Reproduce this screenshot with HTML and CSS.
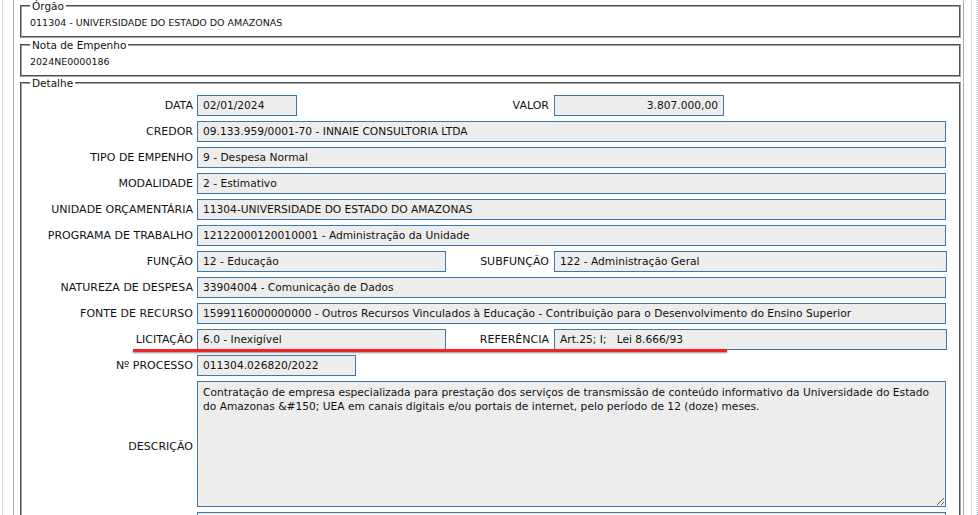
FILE: index.html
```html
<!DOCTYPE html>
<html lang="pt-BR">
<head>
<meta charset="utf-8">
<title>Nota de Empenho</title>
<link rel="stylesheet" href="styles.css">
</head>
<body>
<div class="viewport">
  <div class="page">
    <div class="panel">
      <fieldset class="box box-orgao">
        <legend>Órgão</legend>
        <div class="val">011304 - UNIVERSIDADE DO ESTADO DO AMAZONAS</div>
      </fieldset>
      <fieldset class="box box-nota">
        <legend>Nota de Empenho</legend>
        <div class="val">2024NE0000186</div>
      </fieldset>
      <fieldset class="box box-detalhe">
        <legend>Detalhe</legend>
        <div class="form">
          <div class="lbl">DATA</div>
          <div class="cell"><div class="field w-data">02/01/2024</div></div>
          <div class="lbl lbl2">VALOR</div>
          <div class="cell"><div class="field w-valor num">3.807.000,00</div></div>

          <div class="lbl">CREDOR</div>
          <div class="field span3">09.133.959/0001-70 - INNAIE CONSULTORIA LTDA</div>

          <div class="lbl">TIPO DE EMPENHO</div>
          <div class="field span3">9 - Despesa Normal</div>

          <div class="lbl">MODALIDADE</div>
          <div class="field span3">2 - Estimativo</div>

          <div class="lbl">UNIDADE ORÇAMENTÁRIA</div>
          <div class="field span3">11304-UNIVERSIDADE DO ESTADO DO AMAZONAS</div>

          <div class="lbl">PROGRAMA DE TRABALHO</div>
          <div class="field span3">12122000120010001 - Administração da Unidade</div>

          <div class="lbl">FUNÇÃO</div>
          <div class="field">12 - Educação</div>
          <div class="lbl lbl2">SUBFUNÇÃO</div>
          <div class="field">122 - Administração Geral</div>

          <div class="lbl">NATUREZA DE DESPESA</div>
          <div class="field span3">33904004 - Comunicação de Dados</div>

          <div class="lbl">FONTE DE RECURSO</div>
          <div class="field span3">1599116000000000 - Outros Recursos Vinculados à Educação - Contribuição para o Desenvolvimento do Ensino Superior</div>

          <div class="lbl">LICITAÇÃO</div>
          <div class="field">6.0 - Inexigível</div>
          <div class="lbl lbl2">REFERÊNCIA</div>
          <div class="field pre">Art.25; I;   Lei 8.666/93</div>

          <div class="lbl">Nº PROCESSO</div>
          <div class="cell span3"><div class="field w-proc">011304.026820/2022</div></div>

          <div class="lbl lbl-desc">DESCRIÇÃO</div>
          <textarea class="area span3" readonly>Contratação de empresa especializada para prestação dos serviços de transmissão de conteúdo informativo da Universidade do Estado do Amazonas &amp;#150; UEA em canais digitais e/ou portais de internet, pelo período de 12 (doze) meses.</textarea>

          <div class="lbl"></div>
          <div class="field span3"></div>
        </div>
      </fieldset>
    </div>
  </div>
  <div class="mark"></div>
</div>
</body>
</html>
```
FILE: styles.css
```css
html, body {
  margin: 0;
  padding: 0;
  background: #fff;
}

body {
  font-family: "DejaVu Sans", "Liberation Sans", sans-serif;
  color: #111;
}

.viewport {
  position: relative;
  min-height: 100vh;
  padding-left: 2px;
  border-right: 1px dotted #a9c7df;
  overflow: hidden;
}

.page {
  margin-right: 5px;
  padding: 0 7px 0 10px;
  border-left: 1px solid #dcdcdc;
  border-right: 1px solid #dcdcdc;
}

.panel {
  padding: 0 2px 0 6px;
  border-left: 1px solid #ababab;
  border-right: 1px solid #ababab;
}

.box {
  margin: 0;
  padding: 3px 8px 6px 8px;
  border: 2px groove #a4a4a4;
  min-width: 0;
}

.box legend {
  padding: 0 2px;
  font-size: 10.5px;
  line-height: 14px;
  color: #111;
}

.box-orgao { margin-top: -1px; }
.box-nota { margin-top: 0; }
.box-detalhe { margin-top: -1px; padding-top: 5px; padding-bottom: 0; }

.val {
  font-size: 9.5px;
  line-height: 14px;
  white-space: nowrap;
}

.form {
  display: grid;
  grid-template-columns: 167px 249px 108px 393px;
  row-gap: 5px;
  align-items: center;
}

.lbl {
  text-align: right;
  padding-right: 4px;
  font-size: 11px;
  line-height: 14px;
  white-space: nowrap;
  color: #111;
}

.lbl2 { padding-right: 5px; }
.lbl-desc { padding-top: 5px; }

.cell { display: flex; }

.field {
  box-sizing: border-box;
  height: 21px;
  padding: 0 5px;
  border: 1px solid #3b78ae;
  background: #ededed;
  font-size: 10.67px;
  line-height: 19px;
  color: #111;
  white-space: nowrap;
  overflow: hidden;
}

.pre { white-space: pre; }

.span3 {
  grid-column: 2 / 5;
  margin-right: 1px;
}

.w-data { width: 100px; }
.w-valor { width: 170px; }
.w-proc { width: 159px; }
.num { text-align: right; }

.area {
  display: block;
  box-sizing: border-box;
  width: 749px;
  height: 126px;
  margin: 0;
  padding: 4px 5px;
  border: 1px solid #3b78ae;
  border-radius: 0;
  background: #ededed;
  font-family: "DejaVu Sans", "Liberation Sans", sans-serif;
  font-size: 10.67px;
  line-height: 14px;
  color: #111;
  outline: none;
}

.mark {
  position: absolute;
  left: 133px;
  top: 349px;
  width: 594px;
  height: 3px;
  background: #ef2328;
  box-shadow: 0 1px 2px rgba(0, 0, 0, 0.45);
}
```
